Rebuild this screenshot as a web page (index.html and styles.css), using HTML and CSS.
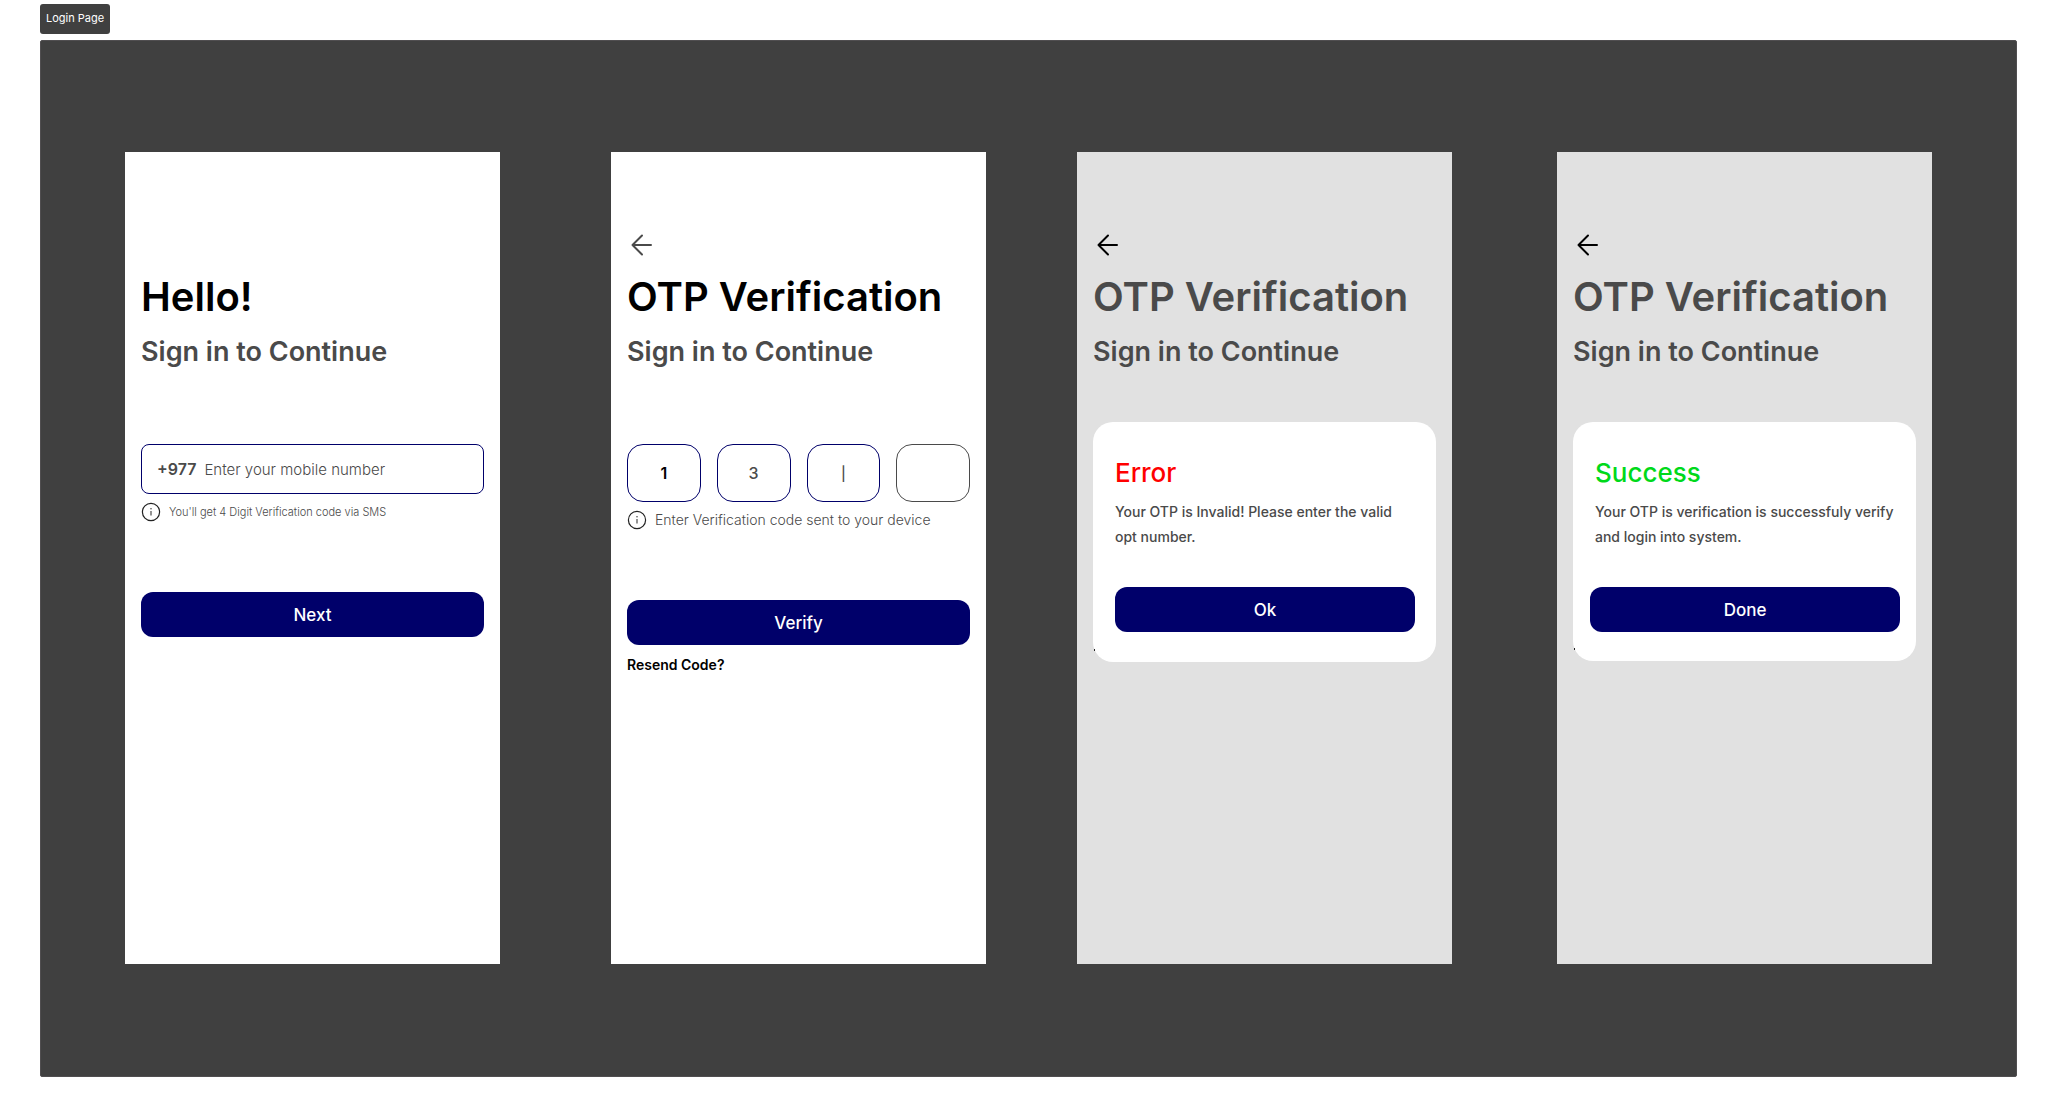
FILE: index.html
```html
<!DOCTYPE html>
<html lang="en">
<head>
<meta charset="utf-8">
<title>Login Page</title>
<meta name="viewport" content="width=device-width, initial-scale=1">
<link rel="stylesheet" href="styles.css">
</head>
<body>
<svg class="sprite" aria-hidden="true">
  <symbol id="arrow" viewBox="0 0 30 30"><path d="M15 5.500 5.500 15l9.500 9.500M5.500 15h18.500" fill="none" stroke="currentColor" stroke-width="2" stroke-linecap="round" stroke-linejoin="round"/></symbol>
  <symbol id="info" viewBox="0 0 20 20"><circle cx="10" cy="10" r="8.600" fill="none" stroke="#222" stroke-width="1.200"/><path d="M10 9v4.500" stroke="#4a4a4a" stroke-width="1.200"/><circle cx="10" cy="6.800" r=".8" fill="#4a4a4a"/></symbol>
</svg>
<h1 class="board-label">Login Page</h1>
<main class="board">
  <section class="phone">
    <div class="topbar"></div>
    <h2 class="title">Hello!</h2>
    <p class="subtitle">Sign in to Continue</p>
    <form class="form">
      <div class="phone-field">
        <label class="prefix" for="mobile">+977</label>
        <input class="mobile" id="mobile" type="tel" placeholder="Enter your mobile number">
      </div>
      <p class="hint hint-small"><svg class="info"><use href="#info"/></svg>You'll get 4 Digit Verification code via SMS</p>
      <button class="button" type="button">Next</button>
    </form>
  </section>

  <section class="phone">
    <div class="topbar"><button class="back back-soft" type="button" aria-label="Back"><svg class="arrow"><use href="#arrow"/></svg></button></div>
    <h2 class="title">OTP Verification</h2>
    <p class="subtitle">Sign in to Continue</p>
    <form class="form">
      <div class="digits">
        <input class="digit digit-first" aria-label="Digit 1" value="1">
        <input class="digit" aria-label="Digit 2" value="3">
        <input class="digit digit-caret" aria-label="Digit 3" value="|">
        <input class="digit digit-empty" aria-label="Digit 4">
      </div>
      <p class="hint"><svg class="info"><use href="#info"/></svg>Enter Verification code sent to your device</p>
      <button class="button" type="button">Verify</button>
      <a class="resend" href="#resend">Resend Code?</a>
    </form>
  </section>

  <section class="phone phone-dimmed">
    <div class="topbar"><button class="back" type="button" aria-label="Back"><svg class="arrow"><use href="#arrow"/></svg></button></div>
    <h2 class="title">OTP Verification</h2>
    <p class="subtitle">Sign in to Continue</p>
    <div class="dialog" role="alertdialog" aria-labelledby="error-title">
      <h3 class="dialog-title error" id="error-title">Error</h3>
      <p class="message">Your OTP is Invalid! Please enter the valid opt number.</p>
      <button class="button" type="button">Ok</button>
    </div>
  </section>

  <section class="phone phone-dimmed">
    <div class="topbar"><button class="back" type="button" aria-label="Back"><svg class="arrow"><use href="#arrow"/></svg></button></div>
    <h2 class="title">OTP Verification</h2>
    <p class="subtitle">Sign in to Continue</p>
    <div class="dialog dialog-wide" role="alertdialog" aria-labelledby="success-title">
      <h3 class="dialog-title success" id="success-title">Success</h3>
      <p class="message">Your OTP is verification is successfuly verify and login into system.</p>
      <button class="button" type="button">Done</button>
    </div>
  </section>
</main>
</body>
</html>
```
FILE: styles.css
```css
:root {
  --navy: #00006a;
  --ink: #4a4a4a;
  --board: #404040;
}

* { box-sizing: border-box; }

body {
  margin: 0;
  padding: 4px 40px 40px;
  background: #fff;
  color: var(--ink);
  font-family: Inter, "Liberation Sans", sans-serif;
}

h1, h2, h3, p { margin: 0; }
input, button { font-family: inherit; }
.sprite { display: none; }

.board-label {
  width: fit-content;
  margin-bottom: 6px;
  padding: 0 6px 2px;
  border-radius: 3px;
  background: var(--board);
  color: #fff;
  font-size: 11px;
  font-weight: 400;
  line-height: 28px;
}

.board {
  display: grid;
  grid-template-columns: 375fr 111fr 375fr 91fr 375fr 105fr 375fr;
  padding: 111px 84px 112px;
  border: 1px solid #504e50;
  border-radius: 2px;
  background: var(--board);
}

.phone {
  min-height: 812px;
  padding: 78px 16px 16px;
  background: #fff;
}

.phone:nth-child(2) { grid-column: 3; }
.phone:nth-child(3) { grid-column: 5; }
.phone:nth-child(4) { grid-column: 7; }
.phone-dimmed { background: #e1e1e1; }

.topbar { height: 30px; margin-bottom: 7px; }

.back {
  display: block;
  padding: 0;
  border: 0;
  background: none;
  color: #000;
}

.back-soft { color: var(--ink); }
.arrow { display: block; width: 30px; height: 30px; }

.title {
  color: #000;
  font-size: 40px;
  font-weight: 600;
  line-height: 60px;
  white-space: nowrap;
}

.phone-dimmed .title { color: var(--ink); }

.subtitle {
  margin-top: 5px;
  font-size: 27px;
  font-weight: 600;
  line-height: 40px;
}

.form { margin-top: 72px; }

.phone-field {
  display: flex;
  align-items: center;
  gap: 8px;
  height: 50px;
  padding: 0 15px;
  border: 1px solid var(--navy);
  border-radius: 8px;
}

.prefix { font-size: 16px; font-weight: 600; }

.mobile {
  flex: 1;
  min-width: 0;
  padding: 0;
  border: 0;
  outline: 0;
  background: none;
  font-size: 15px;
}

.mobile::placeholder { color: var(--ink); font-weight: 300; opacity: 1; }

.hint {
  display: flex;
  align-items: center;
  gap: 8px;
  margin: 8px 0 70px;
  font-size: 14px;
  font-weight: 300;
  line-height: 20px;
}

.hint-small { font-size: 11px; }
.info { flex: none; width: 20px; height: 20px; }

.button {
  display: block;
  width: 100%;
  height: 45px;
  padding: 0;
  border: 0;
  border-radius: 12px;
  background: var(--navy);
  color: #fff;
  font-size: 17px;
  font-weight: 500;
}

.digits {
  display: grid;
  grid-template-columns: repeat(4, 1fr);
  gap: 16px;
}

.digit {
  width: 100%;
  height: 58px;
  padding: 0;
  border: 1px solid var(--navy);
  border-radius: 16px;
  outline: 0;
  background: #fff;
  color: var(--ink);
  font-size: 16px;
  font-weight: 500;
  text-align: center;
}

.digit-first { color: #000; font-weight: 600; }
.digit-caret { font-size: 14px; }
.digit-empty { border-color: var(--ink); }

.resend {
  display: block;
  width: fit-content;
  margin-top: 10px;
  color: #000;
  font-size: 14px;
  font-weight: 600;
  line-height: 20px;
  text-decoration: none;
}

.dialog {
  position: relative;
  margin-top: 50px;
  padding: 32px 21px 30px 22px;
  border-radius: 20px;
  background: #fff;
}

/* Sliver of the covered link that shows at the rounded corner */
.dialog::before {
  content: "";
  position: absolute;
  bottom: 11px;
  left: 1px;
  width: 1px;
  height: 2px;
  background: #222;
}

.dialog-title {
  font-size: 26px;
  font-weight: 500;
  line-height: 38px;
}

.error { color: #f00; }
.success { color: #00d91a; }

.message {
  margin: 7px 0 38px;
  font-size: 14px;
  font-weight: 500;
  line-height: 25px;
}

.dialog-wide { padding: 32px 16px 29px 17px; }
.dialog-wide .dialog-title, .dialog-wide .message { padding-left: 5px; }
```
